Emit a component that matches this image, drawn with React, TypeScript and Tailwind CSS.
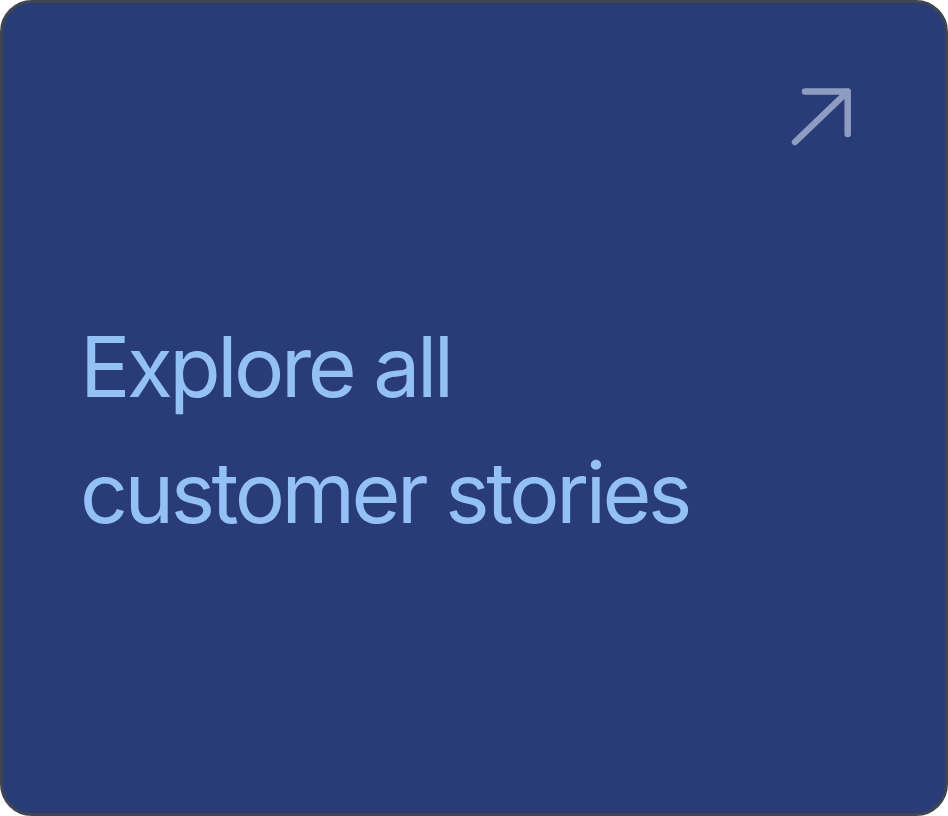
import React from 'react';

const ArrowUpRight: React.FC = () => (
  <svg width="64" height="64" viewBox="0 0 64 64" fill="none" aria-hidden="true">
    <path
      d="M15 7.5H57.7V50M5 58L57.7 7.5"
      stroke="#8f9cc1"
      strokeWidth="6.5"
      strokeLinecap="round"
      strokeLinejoin="round"
    />
  </svg>
);

const App: React.FC = () => {
  return (
    <div className="h-[816px] w-[948px] bg-white">
      <a
        href="#"
        className="flex h-full w-full flex-col rounded-[32px] border-[3px] border-[#3f4652] bg-[#2a3c77]"
      >
        {/* Arrow */}
        <div className="flex justify-end pt-[81px] pr-[91px]">
          <ArrowUpRight />
        </div>

        {/* Title */}
        <p className="mt-[156px] pl-[77px] font-['Inter',sans-serif] text-[84px] font-normal leading-[126px] tracking-[-3.5px] text-[#93c1f7]">
          Explore all
          <br />
          customer stories
        </p>
      </a>
    </div>
  );
};

export default App;
